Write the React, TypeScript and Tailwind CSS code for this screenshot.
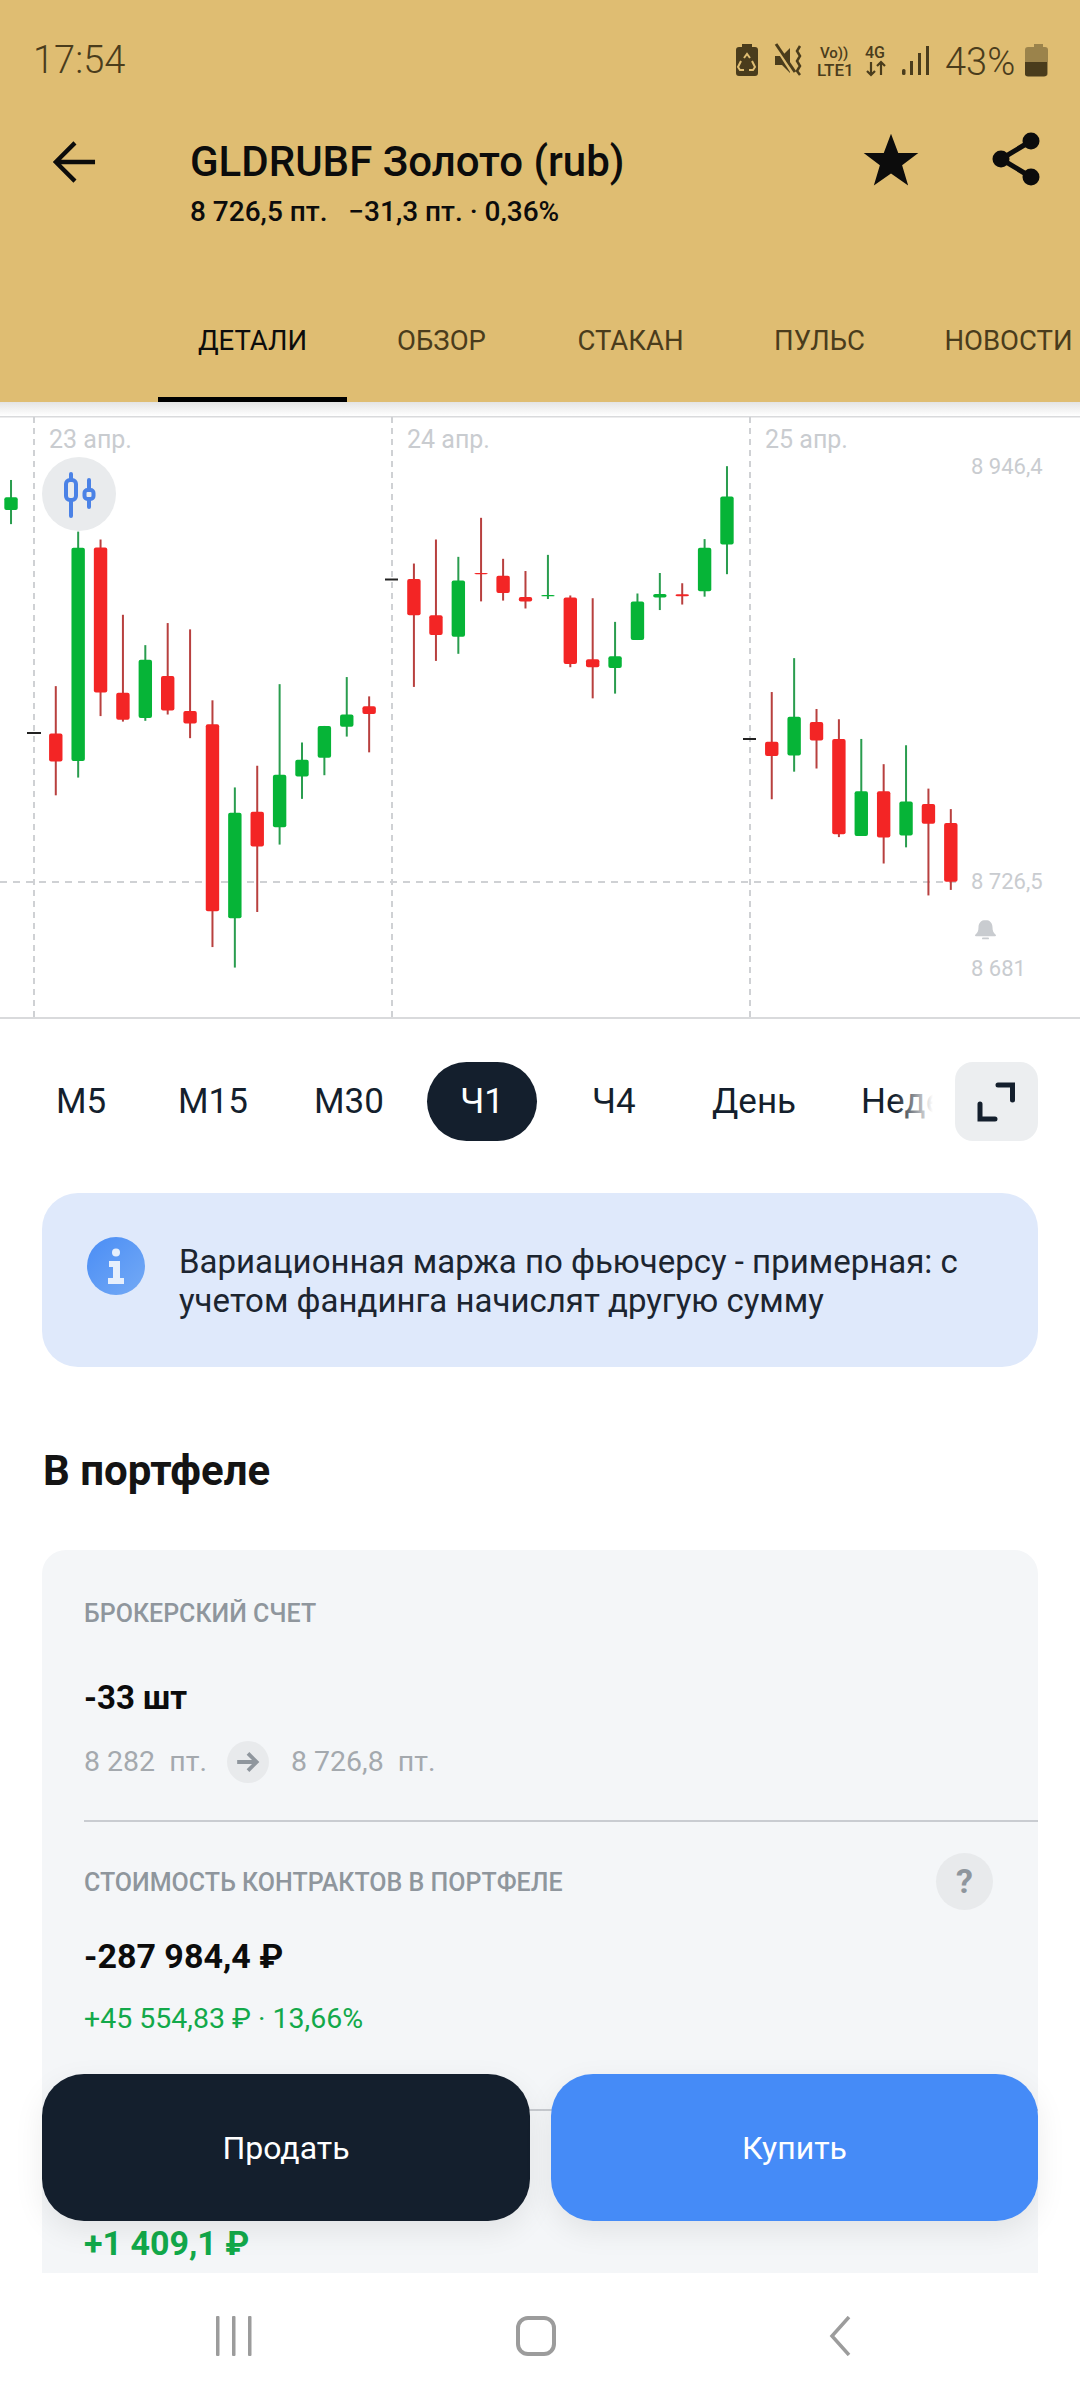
type Candle = [number, number, number, number, number, 'r' | 'g']

// x, wick top, wick bottom, body top, body bottom, measured from the two halves of the chart
const leftCandles: Candle[] = [
  [32, 175, 287, 219, 251, 'g'],
  [162, 698, 975, 818, 889, 'r'],
  [227, 306, 930, 347, 888, 'g'],
  [292, 326, 774, 346, 714, 'r'],
  [357, 517, 788, 715, 783, 'r'],
  [422, 594, 786, 631, 779, 'g'],
  [487, 538, 770, 672, 760, 'r'],
  [552, 554, 830, 761, 793, 'r'],
  [617, 734, 1360, 795, 1269, 'r'],
  [682, 955, 1412, 1019, 1287, 'g'],
  [747, 900, 1271, 1017, 1105, 'r'],
  [812, 693, 1100, 923, 1056, 'g'],
  [877, 841, 984, 885, 927, 'g'],
  [942, 799, 924, 799, 880, 'g'],
  [1007, 675, 826, 770, 801, 'g'],
  [1072, 724, 866, 749, 769, 'r'],
  [1202, 387, 700, 426, 518, 'r'],
  [1266, 326, 634, 518, 568, 'r'],
  [1331, 370, 616, 430, 573, 'g'],
  [1397, 271, 483, 411, 414, 'r'],
  [1461, 375, 481, 418, 462, 'r'],
  [1526, 406, 501, 472, 483, 'r'],
]

const rightCandles: Candle[] = [
  [23, 365, 477, 467, 470, 'g'],
  [88, 468, 650, 473, 642, 'r'],
  [153, 475, 729, 630, 650, 'r'],
  [218, 535, 717, 622, 652, 'g'],
  [283, 463, 581, 483, 581, 'g'],
  [348, 411, 505, 464, 473, 'g'],
  [413, 437, 491, 465, 470, 'r'],
  [478, 325, 471, 347, 457, 'g'],
  [543, 140, 414, 217, 339, 'g'],
  [673, 713, 985, 839, 875, 'r'],
  [738, 627, 915, 776, 874, 'g'],
  [803, 756, 907, 789, 836, 'r'],
  [868, 782, 1081, 832, 1074, 'r'],
  [933, 832, 1078, 965, 1078, 'g'],
  [998, 896, 1148, 965, 1082, 'r'],
  [1063, 848, 1107, 991, 1077, 'g'],
  [1128, 958, 1229, 997, 1047, 'r'],
  [1193, 1010, 1215, 1045, 1194, 'r'],
]

const py = (y: number) => 411 + y / 2.537

function Candles({ items, offset }: { items: Candle[]; offset: number }) {
  return (
    <>
      {items.map(([x, wt, wb, bt, bb, c]) => {
        const cx = offset + x / 2.904
        return (
          <g key={x}>
            <rect x={cx - 1} y={py(wt)} width={2} height={py(wb) - py(wt)} fill={c === 'r' ? '#b8403f' : '#2a9d4f'} />
            <rect
              x={cx - 6.7}
              y={py(bt)}
              width={13.4}
              height={py(bb) - py(bt)}
              rx={2}
              fill={c === 'r' ? '#f32525' : '#06b437'}
            />
          </g>
        )
      })}
    </>
  )
}

function Chart() {
  const labelCls = 'fill-[#c9ccd0] text-[22px]'
  return (
    <svg viewBox="0 416 1080 604" className="block h-[604px] w-[1080px] shrink-0">
      <line x1="0" x2="1080" y1="416.5" y2="416.5" stroke="#d9dadc" strokeWidth="2" />
      <line x1="0" x2="1080" y1="1018" y2="1018" stroke="#d9dadc" strokeWidth="2" />
      {[34, 392, 750].map((x) => (
        <line key={x} x1={x} x2={x} y1="417" y2="1017" stroke="#cfd1d4" strokeWidth="2" strokeDasharray="6 5" />
      ))}
      <line x1="0" x2="958" y1="882" y2="882" stroke="#cfd1d4" strokeWidth="2" strokeDasharray="7 6" />
      <line x1="27" x2="41" y1="733" y2="733" stroke="#222" strokeWidth="2" />
      <line x1="385" x2="398" y1="579.500" y2="579.500" stroke="#222" strokeWidth="2" />
      <line x1="743" x2="756" y1="739" y2="739" stroke="#222" strokeWidth="2" />
      <Candles items={leftCandles} offset={0} />
      <Candles items={rightCandles} offset={540} />
      <text x="49" y="448" className="fill-[#c9ccd0] text-[25px]">23 апр.</text>
      <text x="407" y="448" className="fill-[#c9ccd0] text-[25px]">24 апр.</text>
      <text x="765" y="448" className="fill-[#c9ccd0] text-[25px]">25 апр.</text>
      <text x="971" y="474" className={labelCls}>8 946,4</text>
      <text x="971" y="889" className={labelCls}>8 726,5</text>
      <text x="971" y="976" className={labelCls}>8 681</text>
      {/* bell */}
      <path
        d="M985.5 920c-4.6 0-7 3.3-7 7.2 0 3.6-1 5.6-3.2 7.6-.6.6-.2 1.4.6 1.4h19.2c.8 0 1.2-.8.6-1.4-2.200-2-3.200-4-3.200-7.600 0-3.900-2.400-7.200-7-7.200Z"
        fill="#c9ccd0"
      />
      <rect x="982" y="937.500" width="7" height="1.800" rx="0.900" fill="#c9ccd0" />
      {/* chart type button */}
      <circle cx="79" cy="494" r="37" fill="#e9ebed" />
      <g fill="none" stroke="#4b82e6" strokeLinecap="round">
        <rect x="66" y="480" width="10" height="20" rx="4" strokeWidth="4" />
        <path d="M71 474v5M71 501v15" strokeWidth="4" />
        <rect x="84.500" y="490" width="9" height="9" rx="3" strokeWidth="4" />
        <path d="M89 480v9M89 500v7" strokeWidth="4" />
      </g>
    </svg>
  )
}

function StatusIcons() {
  const c = '#4a3c1c'
  return (
    <svg viewBox="735 30 315 60" className="h-[60px] w-[315px]" fill={c}>
      {/* battery saver with recycle mark */}
      <path d="M741 47v-3h10v3h3c2 0 3 1 3 3v23c0 2-1 3-3 3h-16c-2 0-3-1-3-3V50c0-2 1-3 3-3Z" transform="translate(1 0)" />
      <path
        d="M744 58l3-4 3 4M752 61l3 6-2 3h-4M744 70h-4l-2-3 3-6"
        fill="none"
        stroke="#dfbd72"
        strokeWidth="2"
        transform="translate(0 0)"
      />
      {/* muted speaker */}
      <path d="M775 56h7l8-8v25l-8-8h-7Z" />
      <path d="M776 47l17 27" stroke="#dfbd72" strokeWidth="3" />
      <path d="M776 44l19 28" stroke={c} strokeWidth="3" />
      <path d="M800 46l-3 5 3 5-3 5 3 5-3 5 3 4" fill="none" stroke={c} strokeWidth="2.500" />
      <text x="820" y="58" fontSize="15" fontWeight="500">Vo))</text>
      <text x="817" y="76" fontSize="17" fontWeight="500">LTE1</text>
      <text x="865" y="58" fontSize="16" fontWeight="500">4G</text>
      <path d="M871 62v13M867 71l4 4 4-4M881 75V62M877 66l4-4 4 4" fill="none" stroke={c} strokeWidth="2.200" />
      <rect x="902" y="69" width="3.500" height="6" rx="1.500" />
      <rect x="910" y="61" width="3" height="14" />
      <rect x="918" y="53" width="3" height="22" />
      <rect x="926" y="46" width="3" height="29" />
      <text x="945" y="75" fontSize="38" fontWeight="300">43%</text>
      {/* battery 43% */}
      <path d="M1033 47v-3h9v3h2c2 0 3 1 3 3v23c0 2-1 3-3 3h-17c-2 0-3-1-3-3V50c0-2 1-3 3-3Z" opacity="0.450" transform="translate(1 0)" />
      <path d="M1025 62h22v12c0 1.500-1 2.500-3 2.500h-16c-2 0-3-1-3-2.500Z" />
    </svg>
  )
}

function Header() {
  const tabs = ['ДЕТАЛИ', 'ОБЗОР', 'СТАКАН', 'ПУЛЬС', 'НОВОСТИ']
  return (
    <header className="relative flex h-[402px] shrink-0 flex-col overflow-hidden bg-[#dfbd72]">
      <div className="flex h-[120px] items-center justify-between pl-[33px] pr-[30px]">
        <span className="text-[38px] font-light text-[#4a3c1c]">17:54</span>
        <StatusIcons />
      </div>
      <div className="flex h-[118px] items-start">
        <div className="flex w-[190px] justify-start pl-[52px] pt-[20px]">
          <svg viewBox="0 0 46 46" className="h-[44px] w-[44px]" fill="none" stroke="#0c0c0c" strokeWidth="4.500">
            <path d="M45 23H5M24 3 4 23l20 20" />
          </svg>
        </div>
        <div className="flex-1 pt-[18px]">
          <div className="text-[42px] font-medium leading-[48px] text-[#0c0c0c]">GLDRUBF Золото (rub)</div>
          <div className="mt-[9px] text-[28px] font-medium leading-[34px] text-[#0c0c0c]">
            8 726,5 пт.&nbsp;&nbsp; −31,3 пт. · 0,36%
          </div>
        </div>
        <div className="flex items-center gap-[72px] pr-[40px] pt-[10px]">
          <svg viewBox="0 0 24 24" className="h-[58px] w-[58px]" fill="#0c0c0c">
            <path d="m12 1.500 3 8h8.300l-6.700 5.100 2.500 8.400-7.100-5-7.100 5 2.500-8.400L.7 9.500H9Z" />
          </svg>
          <svg viewBox="0 0 48 54" className="h-[54px] w-[48px]" fill="#0c0c0c">
            <circle cx="39" cy="9" r="8.500" />
            <circle cx="9" cy="27" r="8.500" />
            <circle cx="39" cy="45" r="8.500" />
            <path d="M39 9 9 27l30 18" fill="none" stroke="#0c0c0c" strokeWidth="5" />
          </svg>
        </div>
      </div>
      <nav className="mt-auto flex pl-[158px]">
        {tabs.map((t, i) => (
          <div
            key={t}
            className={
              i === 0
                ? 'flex h-[124px] w-[189px] shrink-0 items-center justify-center border-b-[5px] border-black pt-[6px] text-[27.5px] text-[#0c0c0c]'
                : 'flex h-[124px] w-[189px] shrink-0 items-center justify-center border-b-[5px] border-transparent pt-[6px] text-[27.5px] text-[#4a3c1c]'
            }
          >
            {t}
          </div>
        ))}
      </nav>
    </header>
  )
}

function Timeframes() {
  return (
    <div className="relative mt-[42px] h-[79px] shrink-0 overflow-hidden text-[35px] text-[#141f2d]">
      <div className="flex h-full items-center pl-[56px]">
        <span className="w-[122px] shrink-0 pt-[2px]">М5</span>
        <span className="w-[136px] shrink-0 pt-[2px]">М15</span>
        <span className="w-[113px] shrink-0 pt-[2px]">М30</span>
        <span className="flex h-[79px] w-[110px] shrink-0 items-center justify-center rounded-[40px] bg-[#141f2d] pt-[2px] text-white">
          Ч1
        </span>
        <span className="w-[175px] shrink-0 pl-[55px] pt-[2px]">Ч4</span>
        <span className="w-[149px] shrink-0 pt-[2px]">День</span>
        <span className="shrink-0 pt-[2px]">Неделя</span>
      </div>
      <div className="absolute bottom-0 right-0 top-0 flex w-[185px] items-center justify-end pr-[42px]">
        <div className="absolute inset-y-0 left-0 w-[38px] bg-gradient-to-r from-transparent to-white" />
        <div className="absolute inset-y-0 left-[38px] right-0 bg-white" />
        <div className="relative flex h-[79px] w-[83px] items-center justify-center rounded-[18px] bg-[#eceef0]">
          <svg viewBox="0 0 40 40" className="h-[40px] w-[40px]" fill="none" stroke="#141f2d" strokeWidth="5" strokeLinecap="round">
            <path d="M21 3h14.500v15M3 22v15h15" />
          </svg>
        </div>
      </div>
    </div>
  )
}

function InfoCard() {
  return (
    <div className="mx-[42px] mt-[52px] flex h-[174px] shrink-0 rounded-[36px] bg-[#dfe9fb] pl-[45px] pt-[44px]">
      <svg viewBox="0 0 58 58" className="h-[58px] w-[58px] shrink-0">
        <defs>
          <linearGradient id="infoGrad" x1="0" y1="0" x2="1" y2="1">
            <stop offset="0" stopColor="#4a8df5" />
            <stop offset="1" stopColor="#74aaf5" />
          </linearGradient>
        </defs>
        <circle cx="29" cy="29" r="29" fill="url(#infoGrad)" />
        <circle cx="29" cy="15.500" r="4" fill="#e6effc" />
        <path d="M22 24h11v17h4v6H21v-6h5V30h-4Z" fill="#e6effc" />
      </svg>
      <p className="ml-[34px] pt-[5px] text-[33px] leading-[39px] text-[#1c2530]">
        Вариационная маржа по фьючерсу - примерная: с<br />
        учетом фандинга начислят другую сумму
      </p>
    </div>
  )
}

function Portfolio() {
  return (
    <div className="mx-[42px] mt-[53px] rounded-t-[24px] bg-[#f4f6f8] pb-[120px]">
      <div className="pl-[42px] pt-[50px]">
        <div className="text-[25px] font-medium leading-[28px] text-[#8f969d]">БРОКЕРСКИЙ СЧЕТ</div>
        <div className="mt-[50px] text-[33px] font-bold leading-[40px] text-[#0c0c0c]">-33 шт</div>
        <div className="mt-[22px] flex h-[44px] items-center text-[28.5px] text-[#a4a9ae]">
          <span>8 282&nbsp;&nbsp;пт.</span>
          <span className="ml-[20px] flex h-[42px] w-[42px] items-center justify-center rounded-full bg-[#e8eaec]">
            <svg viewBox="0 0 24 24" className="h-[26px] w-[26px]" fill="none" stroke="#8f969d" strokeWidth="3.500">
              <path d="M2 12h18M12 4l8 8-8 8" />
            </svg>
          </span>
          <span className="ml-[22px]">8 726,8&nbsp;&nbsp;пт.</span>
        </div>
      </div>
      <div className="ml-[42px] mt-[36px] h-[2px] bg-[#c9ccd1]" />
      <div className="pl-[42px] pr-[45px]">
        <div className="mt-[31px] flex h-[57px] items-center justify-between">
          <span className="pt-[3px] text-[25px] font-medium text-[#8f969d]">СТОИМОСТЬ КОНТРАКТОВ В ПОРТФЕЛЕ</span>
          <span className="flex h-[57px] w-[57px] items-center justify-center rounded-full bg-[#e8eaec] text-[34px] font-bold text-[#8f969d]">
            ?
          </span>
        </div>
        <div className="mt-[26px] text-[34px] font-bold leading-[40px] text-[#0c0c0c]">-287 984,4 ₽</div>
        <div className="mt-[25px] text-[28.5px] leading-[36px] text-[#12a94a]">+45 554,83 ₽ · 13,66%</div>
      </div>
      <div className="ml-[42px] mt-[72px] h-[2px] bg-[#c9ccd1]" />
      <div className="pl-[42px] pt-[112px] text-[34px] font-bold leading-[40px] text-[#12a94a]">+1 409,1 ₽</div>
    </div>
  )
}

function BottomNav() {
  return (
    <div className="flex h-[127px] shrink-0 items-start bg-white pl-[216px] pt-[43px]">
      <svg viewBox="0 0 36 40" className="h-[40px] w-[36px]" fill="#9c9c9c">
        <rect x="0" y="0" width="3.500" height="40" rx="1" />
        <rect x="16" y="0" width="3.500" height="40" rx="1" />
        <rect x="32" y="0" width="3.500" height="40" rx="1" />
      </svg>
      <div className="ml-[264px] h-[40px] w-[40px] rounded-[12px] border-[4px] border-[#9c9c9c]" />
      <svg viewBox="0 0 22 40" className="ml-[273px] h-[40px] w-[22px]" fill="none" stroke="#9c9c9c" strokeWidth="3.500">
        <path d="M20 1 3 20l17 19" />
      </svg>
    </div>
  )
}

export default function App() {
  return (
    <div className="relative flex h-[2400px] w-[1080px] flex-col overflow-hidden bg-white [font-family:Roboto,sans-serif]">
      <Header />
      <div className="h-[14px] shrink-0 bg-gradient-to-b from-[#e4e4e4] to-white" />
      <Chart />
      <main className="flex min-h-0 flex-1 flex-col overflow-hidden">
        <Timeframes />
        <InfoCard />
        <h2 className="ml-[43px] mt-[78px] text-[42px] font-bold leading-[52px] text-[#141414]">В портфеле</h2>
        <Portfolio />
      </main>
      <BottomNav />
      {/* order buttons float above the scrolling content */}
      <div className="absolute left-[42px] right-[42px] top-[2074px] flex gap-[21px] text-[32px] text-white">
        <button type="button" className="h-[147px] w-[488px] rounded-[42px] bg-[#141f2d] shadow-[0_10px_30px_rgba(0,0,0,0.08)]">
          Продать
        </button>
        <button type="button" className="h-[147px] flex-1 rounded-[42px] bg-[#458bf7] shadow-[0_10px_30px_rgba(0,0,0,0.08)]">
          Купить
        </button>
      </div>
    </div>
  )
}
